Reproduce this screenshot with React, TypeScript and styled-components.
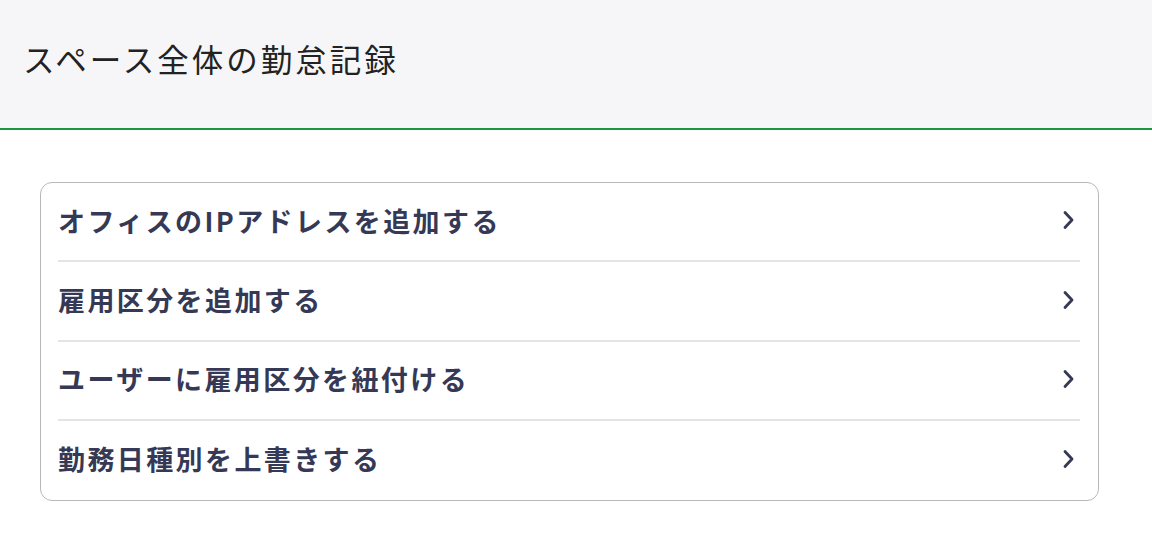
import React from "react";
import styled, { createGlobalStyle } from "styled-components";

const Global = createGlobalStyle`
  html, body { margin: 0; padding: 0; background: #ffffff; }
  body { font-family: "Noto Sans CJK JP", "Noto Sans", sans-serif; }
`;

const Header = styled.header`
  height: 130px;
  background: #f6f6f8;
  border-bottom: 2px solid #1a9640;
  display: flex;
  align-items: center;
  padding: 0 0 12px 23px;
  box-sizing: border-box;
`;

const Title = styled.h1`
  margin: 0;
  font-size: 31.5px;
  line-height: 44px;
  font-weight: 400;
  letter-spacing: 3px;
  color: #222222;
`;

const Main = styled.main`
  padding: 52px 53px 0 40px;
`;

const Card = styled.ul`
  list-style: none;
  margin: 0;
  padding: 0 18px 0 17px;
  border: 1.5px solid #b8b8b8;
  border-radius: 12px;
`;

const Row = styled.li<{ $last?: boolean }>`
  box-sizing: border-box;
  height: ${(p) => (p.$last ? "78.5px" : "79.4px")};
  display: flex;
  align-items: center;
  justify-content: space-between;
  border-bottom: ${(p) => (p.$last ? "none" : "2px solid #e4e4e6")};
  cursor: pointer;
`;

const Label = styled.span`
  font-size: 27px;
  font-weight: 700;
  color: #363955;
  letter-spacing: 2.4px;
  padding-bottom: 3px;
`;

const Chevron = () => (
  <svg width="22" height="22" viewBox="0 0 22 22" style={{ marginRight: 1, marginBottom: 3 }}>
    <path d="M8 3.5 L15 11 L8 18.5" fill="none" stroke="#363955" strokeWidth="2.8" strokeLinecap="round" strokeLinejoin="round" />
  </svg>
);

const items = [
  "オフィスのIPアドレスを追加する",
  "雇用区分を追加する",
  "ユーザーに雇用区分を紐付ける",
  "勤務日種別を上書きする",
];

export default function App() {
  return (
    <>
      <Global />
      <Header>
        <Title>スペース全体の勤怠記録</Title>
      </Header>
      <Main>
        <Card>
          {items.map((t, i) => (
            <Row key={t} $last={i === items.length - 1}>
              <Label>{t}</Label>
              <Chevron />
            </Row>
          ))}
        </Card>
      </Main>
    </>
  );
}
